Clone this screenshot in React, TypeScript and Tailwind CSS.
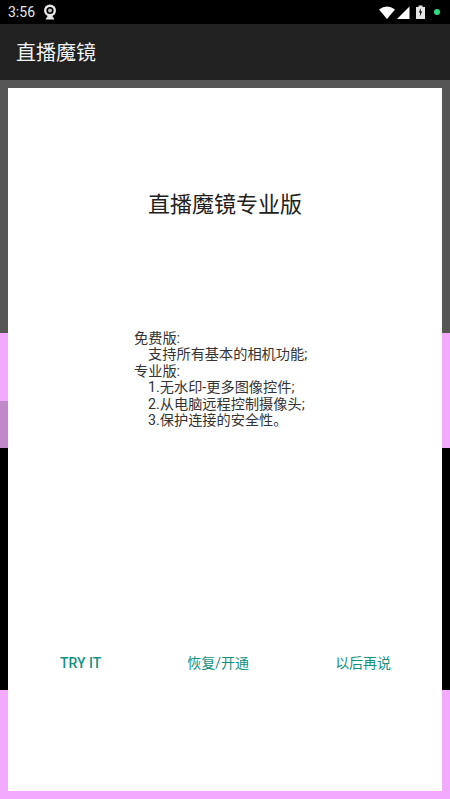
import React from "react";

const cjk = { fontFamily: '"Roboto", "Noto Sans CJK SC", sans-serif' };

function Webcam() {
  return (
    <svg width="14" height="16" viewBox="0 0 14 16">
      <circle cx="7" cy="6.5" r="6" fill="#e8e8e8" />
      <circle cx="7" cy="6.5" r="3.6" fill="#000" />
      <circle cx="7" cy="6.5" r="2" fill="#bdbdbd" />
      <path d="M2.5 15.5 L5 11.5 H9 L11.5 15.5 Z" fill="#e8e8e8" />
    </svg>
  );
}

function StatusIcons() {
  return (
    <div className="flex items-center">
      <svg width="16" height="13" viewBox="0 0 16 13" className="mr-[2px]">
        <path d="M0 3.6 Q8 -2.6 16 3.6 L8 13 Z" fill="#fff" />
      </svg>
      <svg width="13" height="13" viewBox="0 0 13 13" className="mr-[6px]">
        <path d="M0 13 L12.5 0.5 V13 Z" fill="#fff" />
      </svg>
      <svg width="9" height="14" viewBox="0 0 9 14" className="mr-[9px]">
        <path d="M0 2 H2.5 V0.5 H6.5 V2 H9 V14 H0 Z" fill="#e6e6e6" />
        <path d="M4.8 3 L2.8 7.5 H4.2 L3.8 11.5 L6.2 6.6 H4.8 Z" fill="#111" />
      </svg>
      <div className="w-[6px] h-[6px] rounded-full bg-[#2fdc86] mr-[10px]" />
    </div>
  );
}

export default function App() {
  return (
    <div className="relative w-[450px] h-[799px] overflow-hidden flex flex-col bg-black" style={cjk}>
      <div className="h-[24px] bg-black flex items-center justify-between pl-[8px] shrink-0">
        <div className="flex items-center gap-[8px]">
          <span className="text-[14px] leading-[24px] text-[#e8e8e8]">3:56</span>
          <Webcam />
        </div>
        <StatusIcons />
      </div>
      <div className="h-[56px] bg-[#212121] flex items-center pl-[16px] shrink-0">
        <span className="text-[20px] text-[#f2f2f2] translate-y-[1px]">直播魔镜</span>
      </div>
      <div className="h-[253px] bg-[#565656] shrink-0" />
      <div className="h-[68px] bg-[#f3a9fe] shrink-0" />
      <div className="h-[47px] shrink-0 flex">
        <div className="w-[8px] bg-[#c08ac8]" />
        <div className="flex-1 bg-[#f3a9fe]" />
      </div>
      <div className="h-[242px] bg-black shrink-0" />
      <div className="flex-1 bg-[#f3a9fe]" />

      <div className="absolute left-[8px] top-[88px] w-[434px] h-[703px] bg-white flex flex-col items-center">
        <h1 className="mt-[101px] text-[22px] leading-[32px] text-[#212121] font-normal">直播魔镜专业版</h1>
        <div className="mt-[109px] self-start ml-[126px] text-[14.2px] leading-[16.4px] text-[#333333] whitespace-pre">
          <div>免费版:</div>
          <div>    支持所有基本的相机功能;</div>
          <div>专业版:</div>
          <div>    1.无水印-更多图像控件;</div>
          <div>    2.从电脑远程控制摄像头;</div>
          <div>    3.保护连接的安全性。</div>
        </div>
        <div className="mt-auto mb-[118px] w-full flex text-[14px] leading-[20px] text-[#14917f]">
          <span className="ml-[52px] font-medium">TRY IT</span>
          <span className="ml-[86px]">恢复/开通</span>
          <span className="ml-[86px]">以后再说</span>
        </div>
      </div>
    </div>
  );
}
